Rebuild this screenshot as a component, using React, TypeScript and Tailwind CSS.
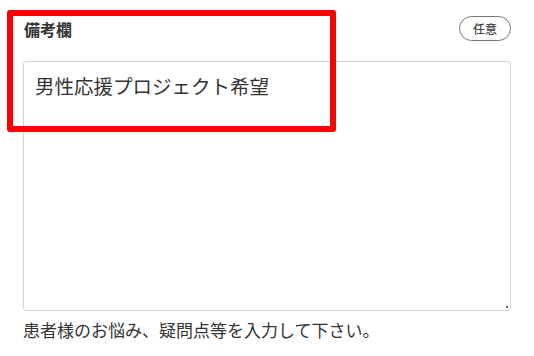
export default function App() {
  return (
    <div
      className="relative w-[534px] h-[356px] bg-white px-[23px] pt-[16px] text-[#333]"
      style={{ fontFamily: '"Noto Sans CJK JP", "Noto Sans", sans-serif' }}
    >
      <div className="flex items-center justify-between h-[25px]">
        <span className="text-[16px] font-bold leading-none text-[#333] pl-[1px]">備考欄</span>
        <span className="flex items-center justify-center h-[25px] w-[52px] rounded-full border border-[#777] text-[12px] font-medium leading-none text-[#444]">
          任意
        </span>
      </div>
      <div className="relative mt-[20px] h-[250px] w-full rounded-[3px] border border-[#d4d4d4] px-[11px] pt-[11px]">
        <p className="text-[19.5px] leading-[26px] text-[#333]">男性応援プロジェクト希望</p>
        <span className="absolute right-[2px] bottom-[2px] h-[2px] w-[2px] bg-[#666]" />
      </div>
      <p className="mt-[7px] text-[17px] leading-[24px] text-[#333]">患者様のお悩み、疑問点等を入力して下さい。</p>
      <div className="absolute left-[7px] top-[10px] w-[329px] h-[122px] rounded-[3px] border-[6px] border-[#ff0000]" />
    </div>
  );
}
